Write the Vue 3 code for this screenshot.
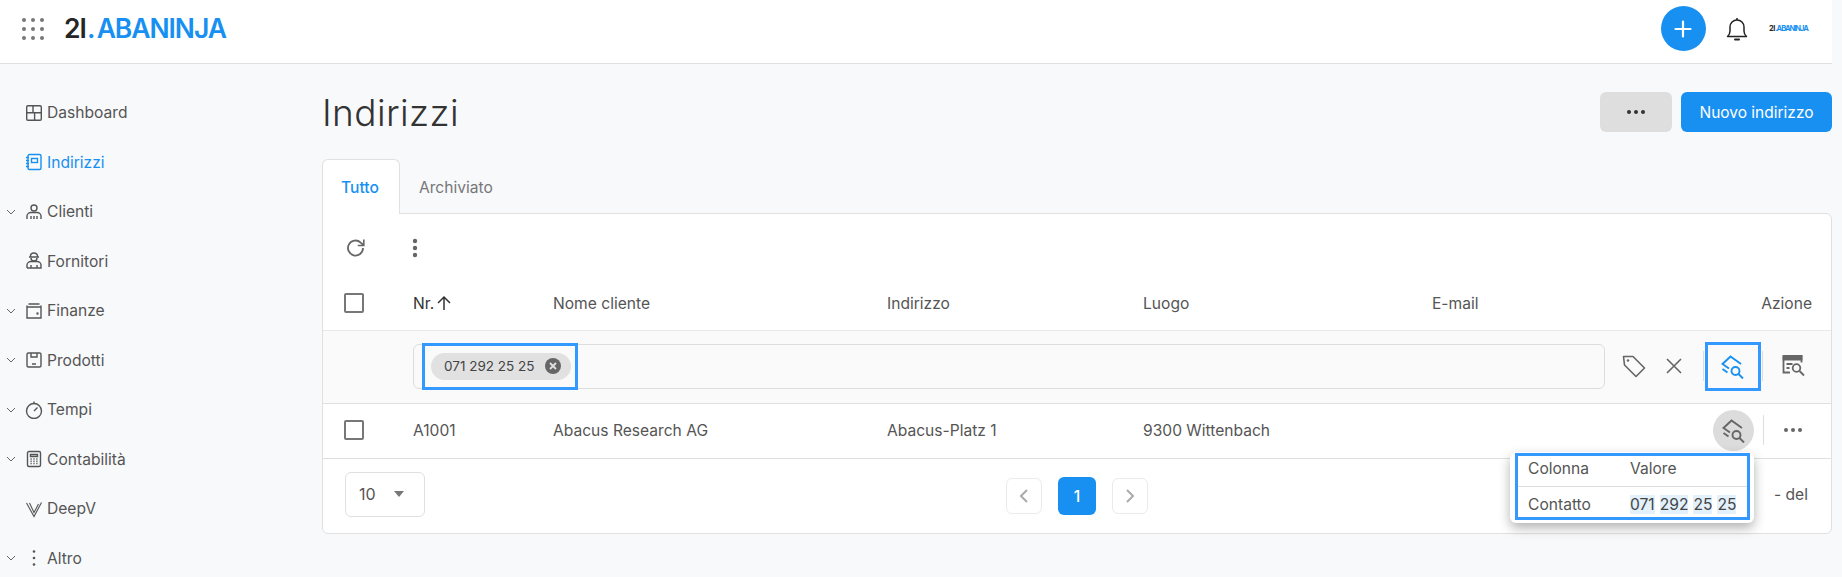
<script setup>
const navItems = [
  { label: 'Dashboard', icon: 'dash', chevron: false },
  { label: 'Indirizzi', icon: 'book', chevron: false, active: true },
  { label: 'Clienti', icon: 'people', chevron: true },
  { label: 'Fornitori', icon: 'supplier', chevron: false },
  { label: 'Finanze', icon: 'wallet', chevron: true },
  { label: 'Prodotti', icon: 'box', chevron: true },
  { label: 'Tempi', icon: 'timer', chevron: true },
  { label: 'Contabilità', icon: 'calc', chevron: true },
  { label: 'DeepV', icon: 'deepv', chevron: false },
  { label: 'Altro', icon: 'dots', chevron: true }
]
const gridDots = [3, 12, 21].flatMap((y) => [3, 12, 21].map((x) => ({ x, y })))
const columns = ['Nome cliente', 'Indirizzo', 'Luogo', 'E-mail']
const values = ['071', '292', '25', '25']
</script>

<template>
  <div class="app">
    <header class="topbar">
      <div class="brand">
        <svg class="grid-icon" width="24" height="24" viewBox="0 0 24 24">
          <circle v-for="(d, i) in gridDots" :key="i" :cx="d.x" :cy="d.y" r="2" fill="#777" />
        </svg>
        <div class="logo"><span class="logo-dark">2I</span><span class="logo-dot">.</span><span class="logo-blue">ABANINJA</span></div>
      </div>
      <div class="top-actions">
        <button class="round-add" aria-label="Aggiungi">
          <svg width="18" height="18" viewBox="0 0 18 18"><path d="M9 1.500v15M1.500 9h15" stroke="#fff" stroke-width="2.200" stroke-linecap="round" /></svg>
        </button>
        <svg class="bell" width="22" height="24" viewBox="0 0 22 24" fill="none" stroke="#222" stroke-width="1.500">
          <path d="M1.500 19.500c1.800-1.500 2.500-3 2.500-5.500V10a7 7 0 0 1 14 0v4c0 2.500.7 4 2.500 5.500z" stroke-linejoin="round" />
          <path d="M11 1v2" /><path d="M9 22.500h4" stroke-linecap="round" stroke-width="2" />
        </svg>
        <div class="logo-small"><span class="logo-dark">2I</span><span class="logo-blue">.ABANINJA</span></div>
      </div>
    </header>

    <div class="body">
      <nav class="sidebar">
        <div v-for="item in navItems" :key="item.label" class="nav-item" :class="{ active: item.active }">
          <span class="chev">
            <svg v-if="item.chevron" width="10" height="6" viewBox="0 0 10 6" fill="none" stroke="#666" stroke-width="1"><path d="M1 1l4 4 4-4" /></svg>
          </span>
          <svg class="nav-icon" width="18" height="18" viewBox="0 0 18 18" fill="none" stroke="currentColor" stroke-width="1.400">
            <template v-if="item.icon === 'dash'">
              <rect x="1.700" y="1.700" width="14.600" height="14.600" rx="1.200" /><path d="M1.700 8.800h14.600M8 1.700v7.100M9.600 8.800v7.500" />
            </template>
            <template v-else-if="item.icon === 'book'">
              <rect x="3" y="1.500" width="13" height="15" rx="1.500" /><rect x="6.500" y="5.500" width="6" height="4" />
              <path d="M1 4.500h3M1 7.500h3M1 10.500h3M1 13.500h3" />
            </template>
            <template v-else-if="item.icon === 'people'">
              <circle cx="9" cy="5" r="3" /><path d="M2 16v-3c0-2 2-3.500 4-3.500h6c2 0 4 1.500 4 3.500v3M6 16v-3M9 16v-3M12 16v-3" />
            </template>
            <template v-else-if="item.icon === 'supplier'">
              <path d="M5.500 5V4a3.500 3 0 0 1 7 0v1M4 5h10" /><path d="M6 6a3 3 0 0 0 6 0" />
              <path d="M2 16v-3c0-2 2-3.500 4-3.500h6c2 0 4 1.500 4 3.500v3H2M6 16v-3M12 16v-3" />
            </template>
            <template v-else-if="item.icon === 'wallet'">
              <path d="M3.500 2h11M2 5h14v11H2zM2 5V3.500M16 5V3.500" /><circle cx="12.500" cy="11.500" r=".5" fill="currentColor" />
            </template>
            <template v-else-if="item.icon === 'box'">
              <rect x="2" y="2" width="14" height="14" rx="1.500" /><path d="M6 2v4h6V2M7 13h4" />
            </template>
            <template v-else-if="item.icon === 'timer'">
              <circle cx="9" cy="10" r="7.500" /><path d="M9 .5v2M9 10l3.500-3.500" />
            </template>
            <template v-else-if="item.icon === 'calc'">
              <rect x="2.500" y="1.500" width="13" height="15" rx="1.500" /><path d="M5.500 4.500h7v2h-7z" />
              <path d="M5.500 9h7M5.500 11.200h7M5.500 13.500h7" stroke-dasharray="1.200 1.700" />
            </template>
            <template v-else-if="item.icon === 'deepv'">
              <path d="M1.500 3L9 16.500 16.500 2.500M4.500 3L9 12.500 13.500 4" stroke-width="1.100" />
            </template>
            <template v-else>
              <circle cx="9" cy="2.500" r="1.300" fill="currentColor" stroke="none" />
              <circle cx="9" cy="9" r="1.300" fill="currentColor" stroke="none" />
              <circle cx="9" cy="15.500" r="1.300" fill="currentColor" stroke="none" />
            </template>
          </svg>
          <span class="nav-label">{{ item.label }}</span>
        </div>
      </nav>

      <main class="main">
        <div class="page-head">
          <h1>Indirizzi</h1>
          <div class="head-actions">
            <button class="btn-more" aria-label="Altro">
              <svg width="20" height="6" viewBox="0 0 20 6"><circle cx="3" cy="3" r="2" fill="#333" /><circle cx="10" cy="3" r="2" fill="#333" /><circle cx="17" cy="3" r="2" fill="#333" /></svg>
            </button>
            <button class="btn-primary">Nuovo indirizzo</button>
          </div>
        </div>

        <div class="tabs">
          <div class="tab selected">Tutto</div>
          <div class="tab">Archiviato</div>
        </div>

        <section class="card">
          <div class="tools">
            <svg width="22" height="22" viewBox="0 0 22 22" fill="none" stroke="#666" stroke-width="1.800">
              <path d="M18 11a7.500 7.500 0 1 1-2.300-5.400L18.500 8" /><path d="M18.800 2.500v6h-6" stroke-width="1.600" />
            </svg>
            <svg class="tool-dots" width="6" height="20" viewBox="0 0 6 20"><circle cx="3" cy="3" r="2.200" fill="#666" /><circle cx="3" cy="10" r="2.200" fill="#666" /><circle cx="3" cy="17" r="2.200" fill="#666" /></svg>
          </div>

          <div class="row head-row">
            <span class="checkbox"></span>
            <span class="nr-head">Nr.
              <svg width="16" height="16" viewBox="0 0 16 16" fill="none" stroke="#333" stroke-width="1.500"><path d="M8 15V2M2 8l6-6 6 6" /></svg>
            </span>
            <span v-for="c in columns" :key="c">{{ c }}</span>
            <span class="azione">Azione</span>
          </div>

          <div class="filter-row">
            <div class="filter-input">
              <div class="chip-mark">
                <span class="chip">071 292 25 25
                  <svg width="16" height="16" viewBox="0 0 16 16"><circle cx="8" cy="8" r="8" fill="#666" /><path d="M5 5l6 6M11 5l-6 6" stroke="#e0e0e0" stroke-width="1.800" /></svg>
                </span>
              </div>
            </div>
            <div class="filter-tools">
              <svg class="tag-icon" width="26" height="26" viewBox="0 0 26 26" fill="none" stroke="#666" stroke-width="1.600" stroke-linejoin="round">
                <path d="M2.500 3.500h9.500l11.500 11.500-8.500 8.500L3.500 12z" /><circle cx="7" cy="7.500" r="1.200" fill="#666" stroke="none" />
              </svg>
              <svg class="x-icon" width="16" height="16" viewBox="0 0 16 16" fill="none" stroke="#666" stroke-width="1.600"><path d="M1 1l14 14M15 1L1 15" /></svg>
              <span class="vsep first"></span>
              <div class="search-mark">
                <svg width="24" height="25" viewBox="0 0 24 25" fill="none" stroke="#1890f1" stroke-width="1.900">
                  <path d="M8 14.500L1.500 10 9.500 2.500 20 10" /><path d="M1.500 15l5 3.500" /><circle cx="14.500" cy="17" r="4" /><path d="M17.500 20l4.500 4.500" />
                </svg>
              </div>
              <span class="vsep"></span>
              <svg class="calc-search" width="24" height="24" viewBox="0 0 24 24" fill="none" stroke="#666" stroke-width="1.800">
                <path d="M1.500 2h18v6.500M1.500 2v16.500h6.500" /><path d="M1.500 2h18v3.500h-18z" fill="#666" />
                <path d="M4.500 10h6M4.500 14h3" /><circle cx="14.500" cy="14" r="3.800" /><path d="M17.500 17l4.500 4.500" />
              </svg>
            </div>
          </div>

          <div class="row data-row">
            <span class="checkbox"></span>
            <span>A1001</span>
            <span>Abacus Research AG</span>
            <span>Abacus-Platz 1</span>
            <span>9300 Wittenbach</span>
            <span></span>
            <span class="row-actions">
              <span class="circle">
                <svg width="24" height="25" viewBox="0 0 24 25" fill="none" stroke="#666" stroke-width="1.900">
                  <path d="M8 14.500L1.500 10 9.500 2.500 20 10" /><path d="M1.500 15l5 3.500" /><circle cx="14.500" cy="17" r="4" /><path d="M17.500 20l4.500 4.500" />
                </svg>
              </span>
              <span class="vsep tall"></span>
              <svg class="row-dots" width="20" height="6" viewBox="0 0 20 6"><circle cx="3" cy="3" r="2" fill="#666" /><circle cx="10" cy="3" r="2" fill="#666" /><circle cx="17" cy="3" r="2" fill="#666" /></svg>
            </span>
          </div>

          <div class="foot">
            <div class="page-size">10
              <svg width="12" height="6" viewBox="0 0 12 6"><path d="M1 0h10L6 6z" fill="#777" /></svg>
            </div>
            <div class="pager">
              <span class="page-btn">
                <svg width="10" height="14" viewBox="0 0 10 14" fill="none" stroke="#aaa" stroke-width="2"><path d="M8 1L2 7l6 6" /></svg>
              </span>
              <span class="page-current">1</span>
              <span class="page-btn">
                <svg width="10" height="14" viewBox="0 0 10 14" fill="none" stroke="#aaa" stroke-width="2"><path d="M2 1l6 6-6 6" /></svg>
              </span>
            </div>
            <span class="foot-del">- del</span>
          </div>

          <div class="popover">
            <div class="popover-mark">
              <div class="pop-row pop-head"><span>Colonna</span><span>Valore</span></div>
              <div class="pop-row pop-body">
                <span>Contatto</span>
                <span class="hits"><mark v-for="(v, i) in values" :key="i">{{ v }}</mark></span>
              </div>
            </div>
          </div>
        </section>
      </main>
    </div>
  </div>
</template>

<style>
html, body { margin: 0; background: #f8f9fb; }
</style>

<style scoped>
* { box-sizing: border-box; }
.app {
  width: 1842px;
  height: 577px;
  overflow: hidden;
  background: #f8f9fb;
  font-family: Inter, "Liberation Sans", sans-serif;
  font-size: 15.600px;
  color: #555;
}
button { font-family: inherit; border: 0; cursor: pointer; }

.topbar {
  width: 1832px;
  height: 64px;
  background: #fff;
  border-bottom: 1px solid #e0e0e0;
  display: flex;
  align-items: center;
  justify-content: space-between;
  padding-bottom: 6px;
}
.brand { display: flex; align-items: center; padding-left: 21px; }
.grid-icon { margin-right: 19px; }
.logo { font-size: 26.500px; font-weight: 600; letter-spacing: -.9px; line-height: 1; display: flex; align-items: baseline; }
.logo-dark { color: #262626; }
.logo-dot { color: #1890f1; margin: 0 2px 0 1px; }
.logo-blue { color: #1890f1; letter-spacing: -1.050px; }
.top-actions { display: flex; align-items: center; }
.round-add {
  width: 45px;
  height: 45px;
  padding: 0;
  border-radius: 50%;
  background: #1890f1;
  display: flex;
  align-items: center;
  justify-content: center;
  margin-right: 20.500px;
}
.bell { margin-right: 21px; }
.logo-small { font-size: 7.500px; font-weight: 700; letter-spacing: -.35px; margin-right: 19px; width: 44px; white-space: nowrap; }

.body { display: flex; }
.sidebar { width: 322px; flex: none; padding-top: 24px; }
.nav-item { height: 49.500px; display: flex; align-items: center; color: #555; }
.nav-item.active { color: #1890f1; }
.chev { width: 25px; padding-left: 6px; display: flex; align-items: center; }
.nav-icon { flex: none; margin-right: 4px; }

.main { width: 1510px; flex: none; position: relative; }
.page-head {
  display: flex;
  justify-content: space-between;
  align-items: center;
  height: 95px;
  padding-top: 1px;
}
h1 { margin: 0; font-size: 37px; font-weight: 300; color: #333; line-height: 1; letter-spacing: .4px; }
.head-actions { display: flex; gap: 9px; }
.btn-more { width: 72px; height: 40px; background: #dedede; border-radius: 6px; display: flex; align-items: center; justify-content: center; }
.btn-primary { width: 151px; height: 40px; background: #1890f1; color: #fff; border-radius: 6px; font-size: 15.500px; font-weight: 400; }

.tabs { display: flex; height: 55px; }
.tab { padding: 1px 19px 0; display: flex; align-items: center; color: #777; height: 55px; }
.tab.selected {
  width: 78px;
  padding: 1px 0 0 18px;
  color: #1890f1;
  font-weight: 500;
  background: #fff;
  border: 1px solid #e0e0e0;
  border-bottom: 0;
  border-radius: 6px 6px 0 0;
  position: relative;
  z-index: 1;
}
.card {
  position: relative;
  height: 321px;
  margin-top: -1px;
  background: #fff;
  border: 1px solid #e0e0e0;
  border-radius: 0 6px 6px 6px;
}
.tools { height: 68px; display: flex; align-items: center; padding-left: 22px; }
.tool-dots { margin-left: 45px; }
.row {
  display: grid;
  grid-template-columns: 69px 140px 334px 256px 289px 1fr auto;
  align-items: center;
  padding-left: 21px;
}
.head-row { height: 48px; padding-right: 19px; padding-bottom: 6px; color: #555; }
.checkbox { width: 20px; height: 20px; border: 2px solid #777; border-radius: 2px; display: block; }
.nr-head { color: #333; display: flex; align-items: center; gap: 2px; }
.azione { text-align: right; }

.filter-row {
  height: 74px;
  background: #fafafa;
  border-top: 1px solid #e8e8e8;
  border-bottom: 1px solid #e0e0e0;
  display: flex;
  align-items: center;
  padding-left: 90px;
  padding-bottom: 2px;
}
.filter-input {
  width: 1192px;
  height: 45px;
  background: transparent;
  border: 1px solid #ddd;
  border-radius: 6px;
  display: flex;
  align-items: center;
  padding-left: 8px;
}
.chip-mark {
  height: 47px;
  width: 156px;
  border: 3px solid #3399ff;
  display: flex;
  align-items: center;
  padding-left: 6px;
}
.chip {
  height: 27px;
  width: 140px;
  background: #e1e1e1;
  border-radius: 14px;
  display: flex;
  align-items: center;
  justify-content: space-between;
  padding: 0 10px 0 13px;
  font-size: 13.500px;
  color: #444;
  white-space: nowrap;
}
.filter-tools { display: flex; align-items: center; height: 49px; }
.tag-icon { margin-left: 16px; }
.x-icon { margin-left: 19px; }
.vsep { width: 1px; height: 30px; background: #ddd; display: block; }
.vsep.first { margin-left: 21px; }
.search-mark {
  width: 56px;
  height: 49px;
  margin: 0 1px;
  border: 3px solid #3399ff;
  display: flex;
  align-items: center;
  justify-content: center;
}
.calc-search { margin-left: 19px; }

.data-row { height: 55px; padding-bottom: 2px; border-bottom: 1px solid #e0e0e0; color: #555; }
.row-actions { display: flex; align-items: center; padding-right: 28px; }
.circle { width: 41px; height: 41px; border-radius: 50%; background: #dcdcdc; display: flex; align-items: center; justify-content: center; }
.vsep.tall { margin-left: 9px; }
.row-dots { margin-left: 19px; }

.foot { height: 74px; display: flex; align-items: center; position: relative; padding-left: 22px; }
.page-size {
  width: 80px;
  height: 45px;
  margin-top: -4px;
  border: 1px solid #e0e0e0;
  border-radius: 6px;
  display: flex;
  align-items: center;
  gap: 17px;
  padding-left: 13px;
  font-size: 16px;
  color: #555;
}
.pager { margin-left: 581px; display: flex; align-items: center; gap: 16px; }
.page-btn { width: 36px; height: 36px; border: 1px solid #ebebeb; border-radius: 6px; display: flex; align-items: center; justify-content: center; }
.page-current { width: 38px; height: 38px; background: #1890f1; color: #fff; border-radius: 6px; display: flex; align-items: center; justify-content: center; font-weight: 500; }
.foot-del { position: absolute; right: 23px; top: 26px; }

.popover {
  position: absolute;
  left: 1187px;
  top: 238px;
  width: 244px;
  height: 71px;
  background: #fff;
  border-radius: 6px;
  padding: 1px 4px 3px 5px;
  box-shadow: 0 5px 12px rgba(0, 0, 0, .3);
  z-index: 3;
}
.popover-mark { height: 67px; border: 3px solid #3399ff; }
.pop-row { display: flex; align-items: center; padding-left: 10px; color: #555; }
.pop-row > span:first-child { width: 102px; }
.pop-head { height: 31px; padding-bottom: 6px; border-bottom: 1px solid #ddd; }
.pop-body { height: 30px; padding-top: 4px; }
.hits { display: flex; gap: 5px; }
mark { background: #e3f1fc; color: #444; }
</style>
